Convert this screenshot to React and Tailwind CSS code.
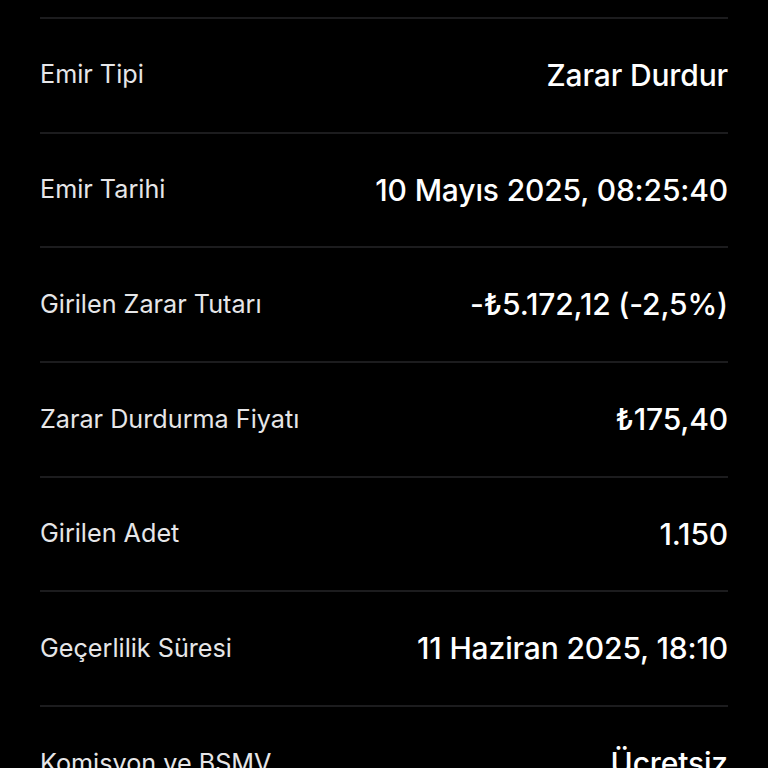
import React from 'react';

const rows = [
  { label: 'Emir Tipi', value: 'Zarar Durdur' },
  { label: 'Emir Tarihi', value: '10 Mayıs 2025, 08:25:40' },
  { label: 'Girilen Zarar Tutarı', value: '-₺5.172,12 (-2,5%)' },
  { label: 'Zarar Durdurma Fiyatı', value: '₺175,40' },
  { label: 'Girilen Adet', value: '1.150' },
  { label: 'Geçerlilik Süresi', value: '11 Haziran 2025, 18:10' },
  { label: 'Komisyon ve BSMV', value: 'Ücretsiz' },
];

const App = () => {
  return (
    <div
      className="w-[768px] h-[768px] overflow-hidden bg-black px-10 pt-[17px]"
      style={{ fontFamily: 'Inter, "Noto Sans", sans-serif' }}
    >
      {rows.map((row) => (
        <div
          key={row.label}
          className="flex items-center justify-between h-[114.7px] shrink-0 border-t-2 border-[#1c1c1e]"
        >
          <span className="text-[25.2px] text-[#e6e6e8]">{row.label}</span>
          <span className="text-[30px] font-medium text-white tracking-[-0.15px]">{row.value}</span>
        </div>
      ))}
    </div>
  );
};

export default App;
